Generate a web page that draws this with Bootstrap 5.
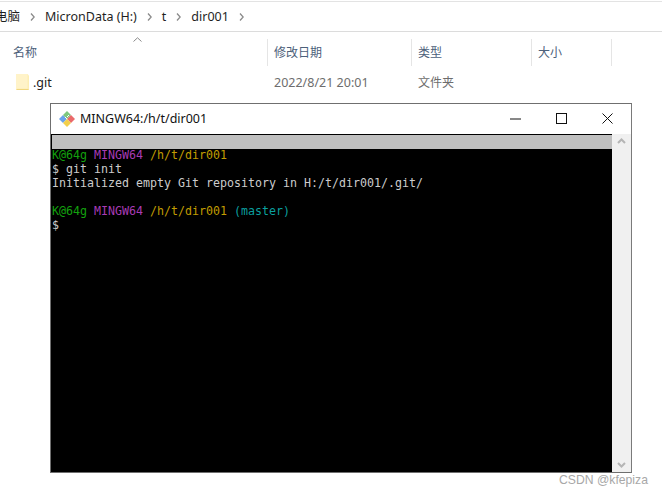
<!DOCTYPE html>
<html lang="zh">
<head>
<meta charset="utf-8">
<title>MINGW64</title>
<link href="https://cdn.jsdelivr.net/npm/bootstrap@5.3.0/dist/css/bootstrap.min.css" rel="stylesheet">
<style>
html,body{height:100%;overflow:hidden;background:#fff;}
body{position:relative;width:662px;height:496px;font-family:"Noto Sans","Noto Sans CJK SC",sans-serif;font-size:12.5px;line-height:16px;}
.crumbs{margin-top:1px;border-top:1px solid #e3e3e3;border-bottom:1px solid #dcdcdc;box-sizing:content-box;height:29px;color:#1f1f1f;}
.crumb-first{margin-left:-5px}
.crumb-sep{width:5px;height:8px;margin:0 10px 0 10px;flex:none;}
.cols{height:35px;padding-top:7px;position:relative;font-size:12px;}
.colh{height:27px;padding-left:6px;color:#4c607a;display:flex;align-items:center;border-right:1px solid #e5e5e5;flex:none;}
.colh-name{width:268px;padding-left:13px}
.colh-date{width:144px}
.colh-type{width:120px}
.colh-size{width:80px}
.sortup{position:absolute;left:133px;top:5px;}
.filerow{height:32px;color:#6d6d6d;}
.foldericon{margin-left:16px;margin-top:-2px;}
.fname{color:#222;margin-left:4px;width:241px}
.fdate{width:144px}
.ftype{font-size:12px}
.win{position:absolute;left:50px;top:103px;width:582px;height:370px;border:1px solid #6f6f6f;border-right-color:#7a7a7a;background:#fff;}
.wintitle{height:30px;padding-bottom:1px;color:#111;font-size:12.5px;}
.gitlogo{margin-left:7px;flex:none}
.wintext{margin-left:4px}
.ctl-gap{margin-left:35px}
.ctl-last{margin-left:35px;margin-right:18px}
.term{height:338px;}
.screen{width:561px;background:#000;border:solid #000;border-width:1px 0 0 1px;font-family:"DejaVu Sans Mono",monospace;font-size:11.63px;line-height:14px;color:#cccccc;flex:none;}
.graybar{height:14px;margin-bottom:-1px;background:#bfbfbf;}
.termline{height:14px;white-space:pre;}
.c-g{color:#13a10e}.c-m{color:#a83bb5}.c-y{color:#c19c00}.c-c{color:#0a9f9f}
.sbar{width:19px;background:#f0f0f0;flex:none;}
.mark-wm{position:absolute;left:559px;top:472px;color:#a8a8a8;font-family:"Liberation Sans",sans-serif;font-size:12.2px;line-height:16px;}
</style>
</head>
<body>
<div class="crumbs d-flex align-items-center">
  <span class="crumb-first">电脑</span>
  <svg class="crumb-sep" viewBox="0 0 5 8"><path d="M1 .5 4.2 4 1 7.5" fill="none" stroke="#8a8a8a" stroke-width="1.3"/></svg>
  <span>MicronData (H:)</span>
  <svg class="crumb-sep" viewBox="0 0 5 8"><path d="M1 .5 4.2 4 1 7.5" fill="none" stroke="#8a8a8a" stroke-width="1.3"/></svg>
  <span>t</span>
  <svg class="crumb-sep" viewBox="0 0 5 8"><path d="M1 .5 4.2 4 1 7.5" fill="none" stroke="#8a8a8a" stroke-width="1.3"/></svg>
  <span>dir001</span>
  <svg class="crumb-sep" viewBox="0 0 5 8"><path d="M1 .5 4.2 4 1 7.5" fill="none" stroke="#8a8a8a" stroke-width="1.3"/></svg>
</div>
<div class="cols d-flex">
  <svg class="sortup" width="9" height="5" viewBox="0 0 9 5"><path d="M.5 4.5 4.5.8 8.5 4.5" fill="none" stroke="#8a8a8a"/></svg>
  <div class="colh colh-name">名称</div>
  <div class="colh colh-date">修改日期</div>
  <div class="colh colh-type">类型</div>
  <div class="colh colh-size">大小</div>
</div>
<div class="filerow d-flex align-items-center">
  <svg class="foldericon" width="13" height="16" viewBox="0 0 13 16"><path d="M0 0H11.5L13 1.5V16H0Z" fill="#fdeeb4"/><path d="M0 0H11.5V14.5H1V16H0Z" fill="#fff3c9"/><path d="M.5 15.5H12.5" stroke="#f1d77f"/></svg>
  <span class="fname">.git</span>
  <span class="fdate">2022/8/21 20:01</span>
  <span class="ftype">文件夹</span>
</div>
<div class="win">
  <div class="wintitle d-flex align-items-center">
    <svg class="gitlogo" width="18" height="18" viewBox="0 0 18 18">
      <path d="M1 9 5 5 9 9 5 13Z" fill="#6aa2ea"/>
      <path d="M9 1 13 5 9 9 5 5Z" fill="#7ec87e"/>
      <path d="M13 5 17 9 13 13 9 9Z" fill="#ea6a6a"/>
      <path d="M5 13 9 9 13 13 9 17Z" fill="#f3cf4b"/>
      <path d="M7 7 9 9M11 5 9 7" stroke="#fff" stroke-width="1"/>
    </svg>
    <span class="wintext">MINGW64:/h/t/dir001</span>
    <svg class="ms-auto" width="11" height="2" viewBox="0 0 11 2"><path d="M0 1H11" stroke="#111"/></svg>
    <svg class="ctl-gap" width="11" height="11" viewBox="0 0 11 11"><rect x=".5" y=".5" width="10" height="10" fill="none" stroke="#111"/></svg>
    <svg class="ctl-last" width="11" height="11" viewBox="0 0 11 11"><path d="M.5.5 10.5 10.5M10.5.5 .5 10.5" stroke="#111"/></svg>
  </div>
  <div class="term d-flex">
    <div class="screen">
      <div class="graybar"></div>
      <div class="termline"><span class="c-g">K@64g </span><span class="c-m">MINGW64 </span><span class="c-y">/h/t/dir001</span></div>
      <div class="termline">$ git init</div>
      <div class="termline">Initialized empty Git repository in H:/t/dir001/.git/</div>
      <div class="termline"> </div>
      <div class="termline"><span class="c-g">K@64g </span><span class="c-m">MINGW64 </span><span class="c-y">/h/t/dir001</span> <span class="c-c">(master)</span></div>
      <div class="termline">$</div>
    </div>
    <div class="sbar d-flex flex-column justify-content-between align-items-center py-1">
      <svg width="9" height="6" viewBox="0 0 9 6"><path d="M1 5 4.5 1.5 8 5" fill="none" stroke="#b5b5b5" stroke-width="2"/></svg>
      <svg width="9" height="6" viewBox="0 0 9 6"><path d="M1 1 4.5 4.5 8 1" fill="none" stroke="#b5b5b5" stroke-width="2"/></svg>
    </div>
  </div>
</div>
<div class="mark-wm">CSDN @kfepiza</div>
</body>
</html>
